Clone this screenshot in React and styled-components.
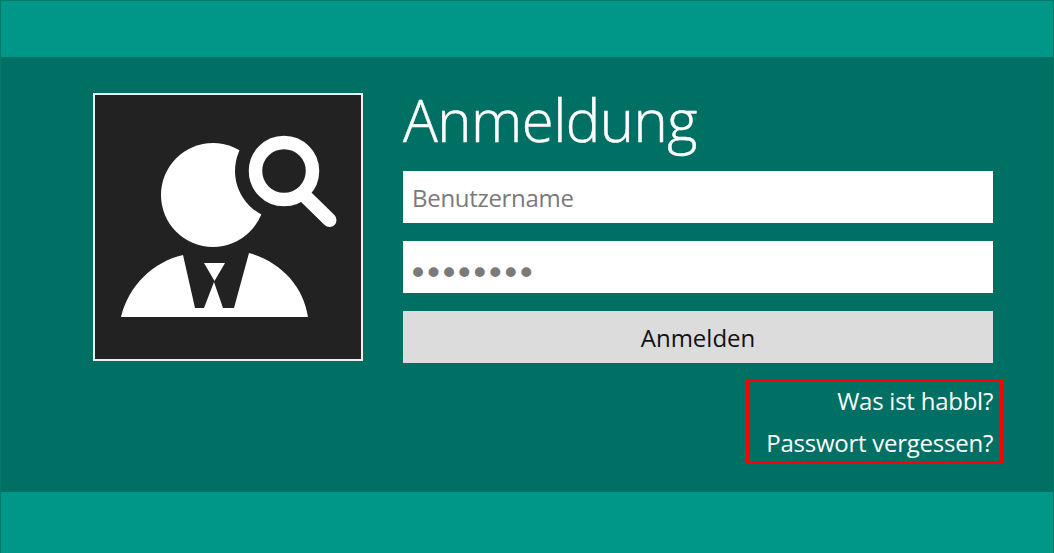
import React from "react";
import styled, { createGlobalStyle } from "styled-components";

const Global = createGlobalStyle`
  html, body { margin: 0; padding: 0; background: #fff; }
  * { box-sizing: border-box; }
`;

const Page = styled.div`
  width: 1054px;
  height: 553px;
  display: flex;
  flex-direction: column;
  background: #009688;
  border: 1px solid #00796b;
  border-bottom: 0;
  font-family: "Open Sans", "Noto Sans", sans-serif;
  overflow: hidden;
`;

const Band = styled.div`
  height: ${(p) => p.$h}px;
  flex: none;
`;

const Main = styled.main`
  height: 435px;
  flex: none;
  background: #006f64;
  padding: 36px 60px 0 92px;
  display: flex;
  gap: 40px;
  align-items: flex-start;
`;

const Logo = styled.div`
  width: 270px;
  height: 268px;
  flex: none;
  background: #222;
  border: 2px solid #f0f0f0;
  overflow: hidden;
  svg { display: block; width: 266px; height: 264px; }
`;

const Form = styled.form`
  width: 590px;
  flex: none;
  display: flex;
  flex-direction: column;
`;

const Title = styled.h1`
  margin: 0 0 15px;
  height: 63px;
  font-size: 58px;
  line-height: 54px;
  font-weight: 300;
  -webkit-text-stroke: 0.5px #fff;
  color: #fff;
  letter-spacing: -0.5px;
`;

const Input = styled.input`
  height: 52px;
  width: 100%;
  margin-bottom: 18px;
  border: 0;
  padding: 0 9px;
  background: #fff;
  color: #7a7a7a;
  font-family: inherit;
  font-size: 24px;
  letter-spacing: -0.3px;
  outline: none;
  &::placeholder { color: #7a7a7a; opacity: 1; }
`;

const PasswordInput = styled(Input)`
  font-family: "DejaVu Sans", sans-serif;
  font-size: 34px;
  letter-spacing: -4.6px;
  padding: 11px 0 0 5px;
`;

const Submit = styled.button`
  height: 52px;
  width: 100%;
  border: 0;
  background: #dcdcdc;
  color: #111;
  font-family: inherit;
  font-size: 24px;
`;

const Links = styled.div`
  align-self: flex-end;
  width: 257px;
  height: 85px;
  margin: 16px -10px 0 0;
  border: 3px solid #f00;
  padding: 0 7px 0 0;
  display: flex;
  flex-direction: column;
  align-items: flex-end;
  justify-content: center;
  gap: 12px;
`;

const HelpLink = styled.a`
  color: #fff;
  font-size: 24px;
  line-height: 30px;
  letter-spacing: -0.25px;
  text-decoration: none;
`;

export default function App() {
  return (
    <>
      <Global />
      <Page>
        <Band $h={56} />
        <Main>
          <Logo>
            <svg viewBox="95 95 266 264" aria-hidden="true">
              <defs>
                <mask id="head-cut">
                  <rect x="95" y="95" width="266" height="264" fill="#fff" />
                  <circle cx="284" cy="171" r="49" fill="#000" />
                </mask>
              </defs>
              <circle cx="213" cy="195" r="52" fill="#fff" mask="url(#head-cut)" />
              <circle cx="284" cy="171" r="28.5" fill="none" stroke="#fff" strokeWidth="13.5" />
              <path d="M306 197 L329.5 220" stroke="#fff" strokeWidth="14" strokeLinecap="round" />
              <path
                d="M121 317 C129 285 153 262 183 255 L195 308 L204 308 L214 282 L223 308 L234 308 L249 253 C280 262 303 285 308 317 Z"
                fill="#fff"
              />
              <path d="M204 263 L225 263 L214.5 281 Z" fill="#fff" />
            </svg>
          </Logo>
          <Form>
            <Title>Anmeldung</Title>
            <Input placeholder="Benutzername" />
            <PasswordInput type="password" defaultValue="12345678" />
            <Submit type="button">Anmelden</Submit>
            <Links>
              <HelpLink>Was ist habbl?</HelpLink>
              <HelpLink>Passwort vergessen?</HelpLink>
            </Links>
          </Form>
        </Main>
        <Band $h={61} />
      </Page>
    </>
  );
}
